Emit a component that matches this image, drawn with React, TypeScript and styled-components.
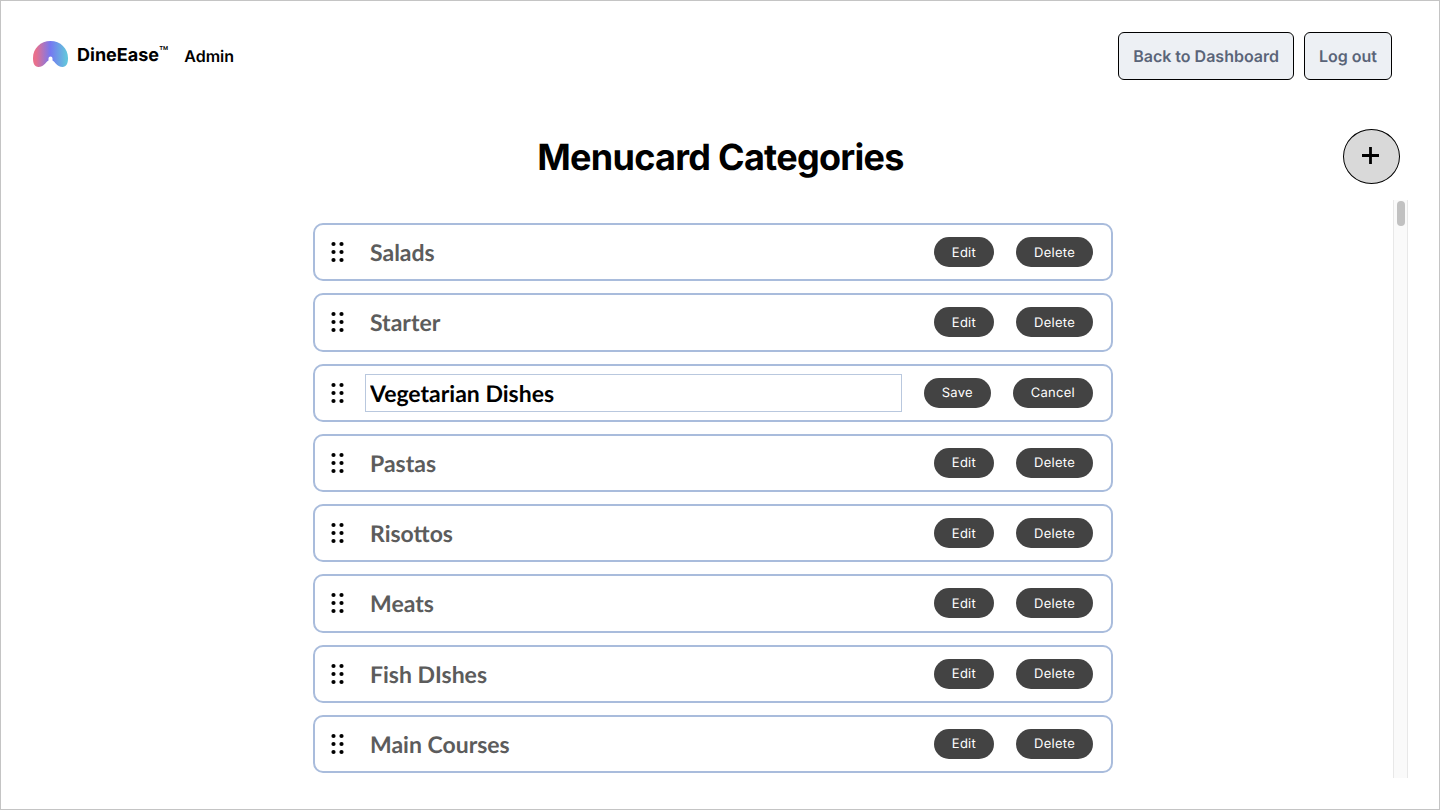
import React from "react";
import styled, { createGlobalStyle } from "styled-components";

const GlobalStyle = createGlobalStyle`
  *, *::before, *::after { box-sizing: border-box; }
  body {
    margin: 0;
    background: #fff;
    color: #000;
    font-family: Inter, "Liberation Sans", sans-serif;
    text-rendering: geometricPrecision;
  }
  button, input { font: inherit; margin: 0; text-rendering: inherit; }
`;

const Page = styled.div`
  display: flex;
  flex-direction: column;
  min-height: 100vh;
  padding: 31px 31px 31px 32px;
  border: 1px solid #c4c4c4;
`;

const Header = styled.header`
  display: flex;
  align-items: center;
  justify-content: space-between;
  padding-right: 16px;
`;

const Brand = styled.div`
  display: flex;
  align-items: center;
`;

const Logo = styled.svg`
  display: block;
  width: 35px;
  height: 27px;
  margin: 0 9px 4px 0;
`;

const BrandName = styled.span`
  font-size: 18px;
  line-height: 24px;
  font-weight: 700;
`;

const TradeMark = styled.sup`
  font-size: 15px;
  line-height: 0;
  font-weight: 500;
  vertical-align: 4px;
`;

const Role = styled.span`
  margin-left: 16px;
  font-size: 16px;
  line-height: 24px;
  font-weight: 600;
`;

const Actions = styled.nav`
  display: flex;
  gap: 10px;
`;

const HeaderButton = styled.button`
  height: 48px;
  padding: 0 14px;
  border: 1px solid #000;
  border-radius: 6px;
  background: #edf0f4;
  color: #5a6478;
  font-size: 16px;
  line-height: 24px;
  font-weight: 600;
  cursor: pointer;
`;

const TitleBar = styled.div`
  display: grid;
  grid-template-columns: 1fr auto 1fr;
  align-items: center;
  margin-top: 49px;
  padding-right: 8px;
  padding-left: 8px;
`;

const Title = styled.h1`
  grid-column: 2;
  margin: 0;
  font-size: 36px;
  line-height: 44px;
  font-weight: 700;
  letter-spacing: -0.02em;
`;

const AddButton = styled.button`
  display: grid;
  place-items: center;
  justify-self: end;
  width: 57px;
  height: 55px;
  padding: 0 2px 2px 0;
  border: 1px solid #000;
  border-radius: 50%;
  background: #d9d9d9;
  cursor: pointer;
`;

const ScrollArea = styled.main`
  display: flex;
  flex: 1;
  margin-top: 16px;
`;

const List = styled.ul`
  display: grid;
  grid-auto-rows: 1fr;
  gap: 12px;
  flex: 0 1 800px;
  margin: 0 auto;
  padding: 23px 0 5px;
  list-style: none;
`;

const Row = styled.li`
  display: flex;
  align-items: center;
  gap: 22px;
  min-height: 58px;
  padding: 0 18px 0 15px;
  border: 2px solid #a9bcdc;
  border-radius: 10px;
`;

const Handle = styled.button`
  display: block;
  flex: none;
  padding: 0;
  border: 0;
  background: none;
  line-height: 0;
  cursor: grab;
`;

const Name = styled.span`
  flex: 1;
  padding-left: 4px;
  color: #5c5c5c;
  font-family: Lato, sans-serif;
  font-size: 23px;
  line-height: 30px;
  font-weight: 700;
`;

const NameInput = styled.input`
  flex: 1;
  min-width: 0;
  height: 38px;
  margin-left: -1px;
  padding: 0 4px;
  border: 1px solid #b9c8de;
  outline: 0;
  background: #fff;
  color: #000;
  font-family: Lato, sans-serif;
  font-size: 23px;
  line-height: 30px;
  font-weight: 700;
`;

const Pill = styled.button`
  height: 30px;
  padding: 1px 18px 0;
  border: 0;
  border-radius: 15px;
  background: #434343;
  color: #fff;
  font-size: 13px;
  line-height: 20px;
  font-weight: 400;
  letter-spacing: 0.02em;
  cursor: pointer;
`;

const Track = styled.div`
  width: 15px;
  padding: 1px 3px;
  border: solid #e8e8e8;
  border-width: 0 1px;
  background: #fafafa;
`;

const Thumb = styled.div`
  width: 8px;
  height: 25px;
  border-radius: 4px;
  background: #c1c1c1;
`;

type Category = { name: string; editing?: boolean };

const categories: Category[] = [
  { name: "Salads" },
  { name: "Starter" },
  { name: "Vegetarian Dishes", editing: true },
  { name: "Pastas" },
  { name: "Risottos" },
  { name: "Meats" },
  { name: "Fish DIshes" },
  { name: "Main Courses" },
];

function DragDots() {
  return (
    <svg width="14" height="22" viewBox="0 0 14 22" aria-hidden="true">
      {[3, 11, 19].map((y) => (
        <React.Fragment key={y}>
          <circle cx="3.500" cy={y} r="2.1" />
          <circle cx="11.500" cy={y} r="2.1" />
        </React.Fragment>
      ))}
    </svg>
  );
}

function CategoryRow({ name, editing }: Category) {
  return (
    <Row>
      <Handle aria-label={`Reorder ${name}`}>
        <DragDots />
      </Handle>
      {editing ? <NameInput aria-label="Category name" defaultValue={name} /> : <Name>{name}</Name>}
      <Pill>{editing ? "Save" : "Edit"}</Pill>
      <Pill>{editing ? "Cancel" : "Delete"}</Pill>
    </Row>
  );
}

export default function App() {
  return (
    <>
      <GlobalStyle />
      <Page>
        <Header>
          <Brand>
            <Logo viewBox="0 0 35 27" aria-hidden="true">
              <defs>
                <linearGradient id="brand" x1="0" x2="1" y1="0" y2="0">
                  <stop offset="0.08" stopColor="#e9708c" />
                  <stop offset="0.5" stopColor="#7578f0" />
                  <stop offset="0.95" stopColor="#63c4dc" />
                </linearGradient>
              </defs>
              <path
                fill="url(#brand)"
                d="M17.500 0C7.500 0 0 7.500 0 17C0 22.500 1.500 26 5.500 26C10.500 26 12.500 21.500 15.500 19.500L15.500 17.500A2 2 0 0 1 19.500 17.500L19.500 19.500C22.500 21.500 24.500 26 29.500 26C33.500 26 35 22.500 35 17C35 7.500 27.500 0 17.500 0Z"
              />
            </Logo>
            <BrandName>
              DineEase<TradeMark>™</TradeMark>
            </BrandName>
            <Role>Admin</Role>
          </Brand>
          <Actions>
            <HeaderButton>Back to Dashboard</HeaderButton>
            <HeaderButton>Log out</HeaderButton>
          </Actions>
        </Header>
        <TitleBar>
          <Title>Menucard Categories</Title>
          <AddButton aria-label="Add category">
            <svg width="18" height="18" viewBox="0 0 18 18" aria-hidden="true">
              <path d="M0 8.500H17M8.500 0V17" stroke="#000" strokeWidth="2.800" />
            </svg>
          </AddButton>
        </TitleBar>
        <ScrollArea>
          <List>
            {categories.map((category) => (
              <CategoryRow key={category.name} {...category} />
            ))}
          </List>
          <Track aria-hidden="true">
            <Thumb />
          </Track>
        </ScrollArea>
      </Page>
    </>
  );
}
